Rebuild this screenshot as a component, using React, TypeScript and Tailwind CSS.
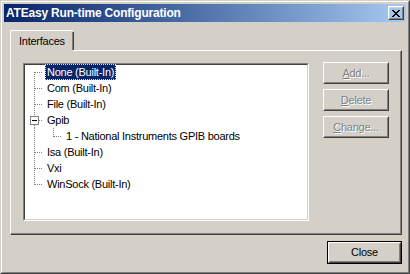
import React from "react";

// Classic Windows 2000 style dialog: ATEasy run-time configuration

type Row = { label: string; level: 0 | 1; selected?: boolean; expander?: boolean };

const rows: Row[] = [
  { label: "None (Built-In)", level: 0, selected: true },
  { label: "Com (Built-In)", level: 0 },
  { label: "File (Built-In)", level: 0 },
  { label: "Gpib", level: 0, expander: true },
  { label: "1 - National Instruments GPIB boards", level: 1 },
  { label: "Isa (Built-In)", level: 0 },
  { label: "Vxi", level: 0 },
  { label: "WinSock (Built-In)", level: 0 },
];

const dot = { stroke: "#808080", strokeWidth: 1, strokeDasharray: "1 1", shapeRendering: "crispEdges" as const };

function Connector({ row, first, last }: { row: Row; first: boolean; last: boolean }) {
  const w = row.level === 0 ? 20 : 39;
  return (
    <svg width={w} height={16} className="shrink-0">
      {row.level === 0 ? (
        <>
          {row.expander ? (
            <>
              <line x1={9.5} y1={0} x2={9.5} y2={4} {...dot} />
              <line x1={9.5} y1={13} x2={9.5} y2={16} {...dot} />
              <line x1={14} y1={8.5} x2={18} y2={8.5} {...dot} />
              <rect x={5.5} y={4.5} width={8} height={8} fill="#fff" stroke="#808080" shapeRendering="crispEdges" />
              <rect x={7} y={8} width={5} height={1} fill="#000" />
            </>
          ) : (
            <>
              <line x1={9.5} y1={first ? 8 : 0} x2={9.5} y2={last ? 9 : 16} {...dot} />
              <line x1={10} y1={8.5} x2={18} y2={8.5} {...dot} />
            </>
          )}
        </>
      ) : (
        <>
          <line x1={9.5} y1={0} x2={9.5} y2={16} {...dot} />
          <line x1={28.5} y1={0} x2={28.5} y2={9} {...dot} />
          <line x1={29} y1={8.5} x2={37} y2={8.5} {...dot} />
        </>
      )}
    </svg>
  );
}

function Raised({ children, className = "" }: { children: React.ReactNode; className?: string }) {
  return (
    <div className={`border border-t-white border-l-white border-r-[#404040] border-b-[#404040] ${className}`}>
      <div className="flex h-full w-full items-center justify-center border border-t-[#d4d0c8] border-l-[#d4d0c8] border-r-[#808080] border-b-[#808080]">
        {children}
      </div>
    </div>
  );
}

function SideButton({ accel, rest }: { accel: string; rest: string }) {
  return (
    <Raised className="h-[22px] w-[66px]">
      <span className="text-[#808080] [text-shadow:1px_1px_0_#fff]">
        <u>{accel}</u>
        {rest}
      </span>
    </Raised>
  );
}

export default function App() {
  return (
    <div className="h-[274px] w-[410px] border border-t-[#d4d0c8] border-l-[#d4d0c8] border-r-[#404040] border-b-[#404040] bg-[#d4d0c8] font-['Liberation_Sans',Arial,sans-serif] text-[11px] leading-none tracking-[-0.25px] text-black">
      <div className="flex h-full flex-col border border-t-white border-l-white border-r-[#808080] border-b-[#808080] p-[2px]">
        {/* title bar */}
        <div className="flex h-[18px] shrink-0 items-center justify-between bg-linear-to-r from-[#0a246a] to-[#a6caf0] pl-[2px] pr-[2px]">
          <span className="text-[12px] font-bold tracking-[-0.2px] text-white">ATEasy Run-time Configuration</span>
          <Raised className="h-[14px] w-[16px]">
            <svg width={8} height={7} shapeRendering="crispEdges">
              <path d="M0 0h2v1H0zM6 0h2v1H6zM1 1h2v1H1zM5 1h2v1H5zM2 2h4v1H2zM3 3h2v1H3zM2 4h4v1H2zM1 5h2v1H1zM5 5h2v1H5zM0 6h2v1H0zM6 6h2v1H6z" fill="#000" />
            </svg>
          </Raised>
        </div>

        <div className="flex flex-1 flex-col pl-[6px] pr-[4px] pt-[8px]">
          {/* tab */}
          <div className="relative z-10 -mb-px flex h-[21px] w-[63px] items-center rounded-tl-[2px] border-l border-t border-l-white border-t-white bg-[#d4d0c8] pl-[8px]">
            <span>Interfaces</span>
            <div className="absolute -right-px top-[1px] bottom-px w-[2px] border-l border-r border-l-[#808080] border-r-[#404040]" />
          </div>

          {/* tab panel */}
          <div className="h-[185px] w-[392px] border border-t-white border-l-white border-r-[#404040] border-b-[#404040]">
            <div className="flex h-full gap-[14px] border-r border-b border-r-[#808080] border-b-[#808080] pl-[12px] pt-[12px]">
              <div className="h-[158px] w-[286px] border border-t-[#808080] border-l-[#808080] border-r-white border-b-white">
                <div className="h-full border border-t-[#404040] border-l-[#404040] border-r-[#d4d0c8] border-b-[#d4d0c8] bg-white">
                  <div className="-mt-px flex flex-col">
                    {rows.map((r, i) => (
                      <div key={r.label} className="flex h-[16px] items-stretch">
                        <Connector row={r} first={i === 0} last={i === rows.length - 1} />
                        <span
                          className={`flex items-center whitespace-nowrap px-[2px] ${
                            r.selected ? "bg-[#0a246a] text-white outline-1 -outline-offset-1 outline-dotted outline-[#f5db95]" : ""
                          }`}
                        >
                          {r.label}
                        </span>
                      </div>
                    ))}
                  </div>
                </div>
              </div>

              <div className="-mt-px flex flex-col gap-[5px]">
                <SideButton accel="A" rest="dd..." />
                <SideButton accel="D" rest="elete" />
                <SideButton accel="C" rest="hange..." />
              </div>
            </div>
          </div>

          {/* footer */}
          <div className="flex justify-end pt-[6px]">
            <div className="h-[23px] w-[75px] border border-black">
              <Raised className="h-full w-full">
                <span>Close</span>
              </Raised>
            </div>
          </div>
        </div>
      </div>
    </div>
  );
}
